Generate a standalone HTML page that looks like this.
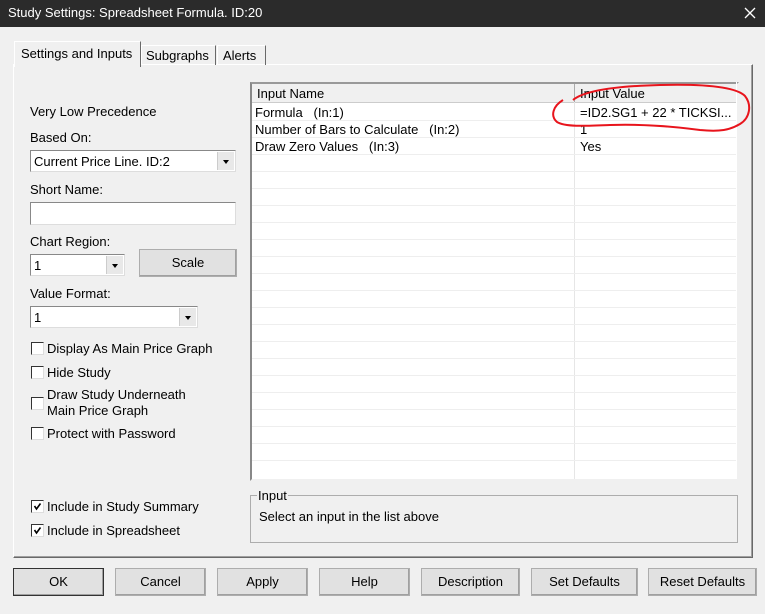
<!DOCTYPE html>
<html><head><style>
body{margin:0;width:765px;height:614px;background:#f0f0f0;font-family:"Liberation Sans",sans-serif;font-size:13px;color:#000;position:relative;overflow:hidden}
.a{position:absolute;white-space:nowrap}
.title{left:0;top:0;width:765px;height:27px;background:#2b2b2b;color:#fff}
.btn{position:absolute;background:#e1e1e1;border:1px solid #adadad;text-align:center;box-sizing:border-box;box-shadow:inset -1px -1px 0 #a0a0a0}
.cb{position:absolute;width:11px;height:11px;background:#fff;border:1px solid #333;border-right-color:#ddd;border-bottom-color:#ddd}
.combo{position:absolute;background:#fff;border:1px solid #888;box-sizing:border-box;border-right-color:#ddd;border-bottom-color:#ddd}
.arr{position:absolute;right:1px;top:1px;bottom:1px;width:16px;background:#e8e8e8;border-left:1px solid #ccc}
.arr:after{content:"";position:absolute;left:5px;top:8px;border:3px solid transparent;border-top:4px solid #000}
</style></head><body>
<div class="a title"><span class="a" style="left:8px;top:5px;font-size:13px">Study Settings: Spreadsheet Formula. ID:20</span>
<svg class="a" style="left:744px;top:7px" width="12" height="12"><path d="M1 1L11 11M11 1L1 11" stroke="#fff" stroke-width="1.3"/></svg></div>

<div class="a" style="left:13px;top:64px;width:738px;height:492px;border:1px solid #fff;border-right-color:#696969;border-bottom-color:#696969;box-shadow:inset -1px -1px 0 #a0a0a0"></div>
<div class="a" style="left:14px;top:41px;width:125px;height:25px;background:#f0f0f0;border:1px solid #fff;border-bottom:none;border-right-color:#696969"><span class="a" style="left:6px;top:4px">Settings and Inputs</span></div>
<div class="a" style="left:141px;top:45px;width:73px;height:19px;border:1px solid #fff;border-bottom:none;border-right-color:#696969"><span class="a" style="left:4px;top:2px">Subgraphs</span></div>
<div class="a" style="left:217px;top:45px;width:47px;height:19px;border:1px solid #fff;border-bottom:none;border-right-color:#696969"><span class="a" style="left:5px;top:2px">Alerts</span></div>

<span class="a" style="left:30px;top:104px">Very Low Precedence</span>
<span class="a" style="left:30px;top:130px">Based On:</span>
<div class="combo" style="left:30px;top:150px;width:206px;height:22px"><span class="a" style="left:3px;top:3px">Current Price Line. ID:2</span><div class="arr"></div></div>
<span class="a" style="left:30px;top:182px">Short Name:</span>
<div class="combo" style="left:30px;top:202px;width:206px;height:23px"></div>
<span class="a" style="left:30px;top:234px">Chart Region:</span>
<div class="combo" style="left:30px;top:254px;width:95px;height:22px"><span class="a" style="left:3px;top:3px">1</span><div class="arr"></div></div>
<div class="btn" style="left:139px;top:249px;width:98px;height:28px;line-height:26px">Scale</div>
<span class="a" style="left:30px;top:286px">Value Format:</span>
<div class="combo" style="left:30px;top:306px;width:168px;height:22px"><span class="a" style="left:3px;top:3px">1</span><div class="arr"></div></div>
<div class="cb" style="left:31px;top:342px"></div><span class="a" style="left:47px;top:341px">Display As Main Price Graph</span>
<div class="cb" style="left:31px;top:366px"></div><span class="a" style="left:47px;top:365px">Hide Study</span>
<div class="cb" style="left:31px;top:397px"></div><span class="a" style="left:47px;top:387px;line-height:16px">Draw Study Underneath<br>Main Price Graph</span>
<div class="cb" style="left:31px;top:427px"></div><span class="a" style="left:47px;top:426px">Protect with Password</span>
<div class="cb" style="left:31px;top:500px"><svg class="a" style="left:1px;top:1px" width="9" height="9"><path d="M1.5 4L3.5 7L7.5 1.5" stroke="#000" stroke-width="1.6" fill="none"/></svg></div><span class="a" style="left:47px;top:499px">Include in Study Summary</span>
<div class="cb" style="left:31px;top:524px"><svg class="a" style="left:1px;top:1px" width="9" height="9"><path d="M1.5 4L3.5 7L7.5 1.5" stroke="#000" stroke-width="1.6" fill="none"/></svg></div><span class="a" style="left:47px;top:523px">Include in Spreadsheet</span>

<div class="a" style="left:250px;top:82px;width:485px;height:395px;background:#fff;border:2px solid #888;border-right-color:#f0f0f0;border-bottom-color:#f0f0f0;border-top-color:#999;overflow:hidden">
 <div class="a" style="left:0;top:0;width:485px;height:18px;background:#f0f0f0;border-bottom:1px solid #ccc"></div>
 <div class="a" style="left:322px;top:0;width:1px;height:395px;background:#e6e6e6"></div>
 <div class="a" style="left:322px;top:0;width:1px;height:18px;background:#aaa"></div>
 <div class="a" style="left:0;top:36px;width:485px;height:1px;background:#eee"></div>
 <div class="a" style="left:0;top:53px;width:485px;height:1px;background:#eee"></div>
 <div class="a" style="left:0;top:70px;width:485px;height:1px;background:#eee"></div>
 <div class="a" style="left:0;top:87px;width:485px;height:1px;background:#eee"></div>
 <div class="a" style="left:0;top:104px;width:485px;height:1px;background:#eee"></div>
 <div class="a" style="left:0;top:121px;width:485px;height:1px;background:#eee"></div>
 <div class="a" style="left:0;top:138px;width:485px;height:1px;background:#eee"></div>
 <div class="a" style="left:0;top:155px;width:485px;height:1px;background:#eee"></div>
 <div class="a" style="left:0;top:172px;width:485px;height:1px;background:#eee"></div>
 <div class="a" style="left:0;top:189px;width:485px;height:1px;background:#eee"></div>
 <div class="a" style="left:0;top:206px;width:485px;height:1px;background:#eee"></div>
 <div class="a" style="left:0;top:223px;width:485px;height:1px;background:#eee"></div>
 <div class="a" style="left:0;top:240px;width:485px;height:1px;background:#eee"></div>
 <div class="a" style="left:0;top:257px;width:485px;height:1px;background:#eee"></div>
 <div class="a" style="left:0;top:274px;width:485px;height:1px;background:#eee"></div>
 <div class="a" style="left:0;top:291px;width:485px;height:1px;background:#eee"></div>
 <div class="a" style="left:0;top:308px;width:485px;height:1px;background:#eee"></div>
 <div class="a" style="left:0;top:325px;width:485px;height:1px;background:#eee"></div>
 <div class="a" style="left:0;top:342px;width:485px;height:1px;background:#eee"></div>
 <div class="a" style="left:0;top:359px;width:485px;height:1px;background:#eee"></div>
 <div class="a" style="left:0;top:376px;width:485px;height:1px;background:#eee"></div>
 <span class="a" style="left:5px;top:2px">Input Name</span>
 <span class="a" style="left:328px;top:2px">Input Value</span>
 <span class="a" style="left:3px;top:21px">Formula &nbsp; (In:1)</span>
 <span class="a" style="left:3px;top:38px">Number of Bars to Calculate &nbsp; (In:2)</span>
 <span class="a" style="left:3px;top:55px">Draw Zero Values &nbsp; (In:3)</span>
 <span class="a" style="left:328px;top:21px">=ID2.SG1 + 22 * TICKSI...</span>
 <span class="a" style="left:328px;top:38px">1</span>
 <span class="a" style="left:328px;top:55px">Yes</span>
</div>
<div class="a" style="left:736px;top:82px;width:1px;height:397px;background:#fff"></div>
<svg class="a" style="left:0;top:0" width="765" height="614"><path d="M573 100C585 90 620 86 660 85C700 84 735 86 745 96C752 105 750 118 740 124C730 130 720 132 700 130C670 126 640 124 610 125C585 126 565 127 557 122C550 116 553 106 563 100" stroke="#e8141c" stroke-width="2" fill="none"/></svg>

<div class="a" style="left:250px;top:495px;width:486px;height:46px;border:1px solid #adadad"></div>
<span class="a" style="left:257px;top:488px;background:#f0f0f0;padding:0 1px">Input</span>
<span class="a" style="left:259px;top:509px">Select an input in the list above</span>

<div class="btn" style="left:13px;top:568px;width:91px;height:28px;line-height:26px;border-color:#333">OK</div>
<div class="btn" style="left:115px;top:568px;width:91px;height:28px;line-height:26px">Cancel</div>
<div class="btn" style="left:217px;top:568px;width:91px;height:28px;line-height:26px">Apply</div>
<div class="btn" style="left:319px;top:568px;width:91px;height:28px;line-height:26px">Help</div>
<div class="btn" style="left:421px;top:568px;width:99px;height:28px;line-height:26px">Description</div>
<div class="btn" style="left:531px;top:568px;width:107px;height:28px;line-height:26px">Set Defaults</div>
<div class="btn" style="left:648px;top:568px;width:109px;height:28px;line-height:26px">Reset Defaults</div>
</body></html>
